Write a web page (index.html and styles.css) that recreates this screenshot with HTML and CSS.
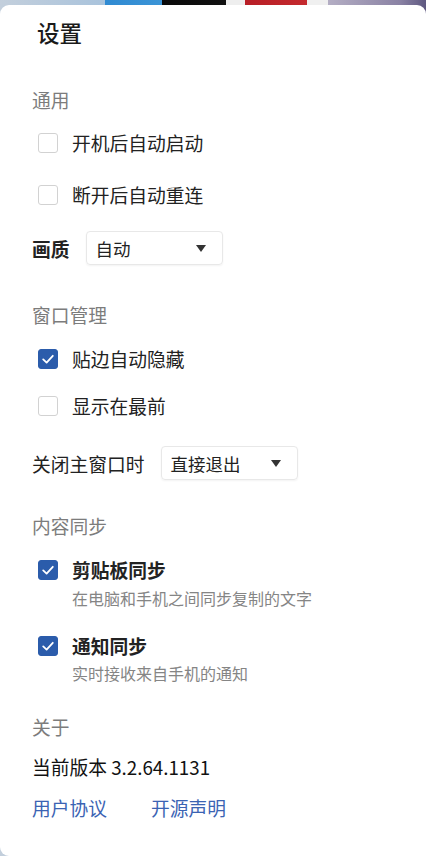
FILE: index.html
```html
<!DOCTYPE html>
<html lang="zh-CN">
<head>
<meta charset="utf-8">
<title>设置</title>
<link rel="stylesheet" href="styles.css">
</head>
<body>
<div class="screen">
  <div class="panel">
    <h1 class="title">设置</h1>

    <div class="section-title s-general">通用</div>
    <div class="check-row r-autostart"><span class="box"></span><span class="label">开机后自动启动</span></div>
    <div class="check-row r-reconnect"><span class="box"></span><span class="label">断开后自动重连</span></div>
    <div class="select-row r-quality">
      <span class="select-label strong">画质</span>
      <div class="select"><span>自动</span><span class="caret"></span></div>
    </div>

    <div class="section-title s-window">窗口管理</div>
    <div class="check-row r-hide"><span class="box checked"><svg viewBox="0 0 20 20" width="20" height="20"><path d="M5.2 10.4 L8.6 13.6 L14.8 6.8" fill="none" stroke="#fff" stroke-width="1.8" stroke-linecap="round" stroke-linejoin="round"/></svg></span><span class="label">贴边自动隐藏</span></div>
    <div class="check-row r-top"><span class="box"></span><span class="label">显示在最前</span></div>
    <div class="select-row r-close">
      <span class="select-label">关闭主窗口时</span>
      <div class="select"><span>直接退出</span><span class="caret"></span></div>
    </div>

    <div class="section-title s-sync">内容同步</div>
    <div class="check-row r-clip"><span class="box checked"><svg viewBox="0 0 20 20" width="20" height="20"><path d="M5.2 10.4 L8.6 13.6 L14.8 6.8" fill="none" stroke="#fff" stroke-width="1.8" stroke-linecap="round" stroke-linejoin="round"/></svg></span><span class="label strong">剪贴板同步</span></div>
    <div class="sub r-clip-sub">在电脑和手机之间同步复制的文字</div>
    <div class="check-row r-notify"><span class="box checked"><svg viewBox="0 0 20 20" width="20" height="20"><path d="M5.2 10.4 L8.6 13.6 L14.8 6.8" fill="none" stroke="#fff" stroke-width="1.8" stroke-linecap="round" stroke-linejoin="round"/></svg></span><span class="label strong">通知同步</span></div>
    <div class="sub r-notify-sub">实时接收来自手机的通知</div>

    <div class="section-title s-about">关于</div>
    <div class="version">当前版本 3.2.64.1131</div>
    <div class="links"><a class="link">用户协议</a><a class="link">开源声明</a></div>
  </div>
</div>
</body>
</html>
```
FILE: styles.css
```css
html, body {
  margin: 0;
  padding: 0;
}
body {
  width: 426px;
  height: 856px;
  overflow: hidden;
  font-family: "Noto Sans CJK SC", "Noto Sans", sans-serif;
  color: #1f1f1f;
}
.screen {
  height: 856px;
  padding-top: 5px;
  box-sizing: border-box;
  background: linear-gradient(to right,
    #c3cfdc 0, #a9c3dc 105px,
    #2f8ad2 105px, #3b94d6 162px,
    #0a0a0a 162px, #111 226px,
    #eeeeee 226px, #eeeeee 245px,
    #b81e26 245px, #c42a2e 307px,
    #f0f0f0 307px, #f0f0f0 328px,
    #b4aec4 328px, #8a82a4 400px, #5e5880 426px);
}
.panel {
  background: #fff;
  height: 851px;
  border-radius: 9px 9px 0 9px;
  padding-left: 32px;
  box-sizing: border-box;
  display: flex;
  flex-direction: column;
  align-items: flex-start;
}
.title {
  margin: 12px 0 0 5px;
  height: 30px;
  line-height: 30px;
  font-size: 22.5px;
  font-weight: 500;
  color: #1a1a1a;
}
.section-title {
  height: 24px;
  line-height: 24px;
  font-size: 18.75px;
  color: #7c7c7c;
}
.check-row {
  display: flex;
  align-items: center;
  height: 24px;
  padding-left: 6px;
  gap: 14px;
  font-size: 18.75px;
  line-height: 24px;
  color: #222;
}
.box {
  width: 20px;
  height: 20px;
  box-sizing: border-box;
  border: 1.5px solid #d2d2d2;
  border-radius: 3px;
  background: #fff;
  display: flex;
  align-items: center;
  justify-content: center;
}
.box.checked {
  background: #2b5cab;
  border-color: #2b5cab;
}
.box svg {
  flex: none;
}
.strong {
  font-weight: 700;
}
.select-row {
  display: flex;
  align-items: center;
  height: 34px;
  gap: 16px;
  font-size: 18.75px;
  color: #222;
}
.select {
  width: 137px;
  height: 34px;
  box-sizing: border-box;
  border: 1px solid #e8e8e8;
  border-radius: 4px;
  box-shadow: 0 1px 2px rgba(0, 0, 0, 0.05);
  display: flex;
  align-items: center;
  justify-content: space-between;
  padding: 0 16px 0 9px;
  font-size: 17.5px;
  color: #222;
}
.caret {
  width: 0;
  height: 0;
  border-left: 5.5px solid transparent;
  border-right: 5.5px solid transparent;
  border-top: 7px solid #333;
}
.sub {
  height: 24px;
  line-height: 24px;
  padding-left: 40px;
  font-size: 16px;
  color: #858585;
}
.version {
  height: 24px;
  line-height: 24px;
  font-size: 18.75px;
  font-weight: 400;
  color: #111;
}
.links {
  display: flex;
  gap: 44px;
  height: 24px;
  line-height: 24px;
  font-size: 18.75px;
}
.link {
  color: #3b63b3;
  text-decoration: none;
}

.s-general { margin-top: 41px; }
.r-autostart { margin-top: 19px; }
.r-reconnect { margin-top: 28px; }
.r-quality { margin-top: 24px; }
.s-window { margin-top: 38px; }
.r-hide { margin-top: 20px; }
.r-top { margin-top: 23px; }
.r-close { margin-top: 28px; }
.s-sync { margin-top: 34px; }
.r-clip { margin-top: 20px; }
.r-clip-sub { margin-top: 4px; }
.r-notify { margin-top: 24px; }
.r-notify-sub { margin-top: 3px; }
.s-about { margin-top: 30px; }
.version { margin-top: 16px; }
.links { margin-top: 17px; }
```
